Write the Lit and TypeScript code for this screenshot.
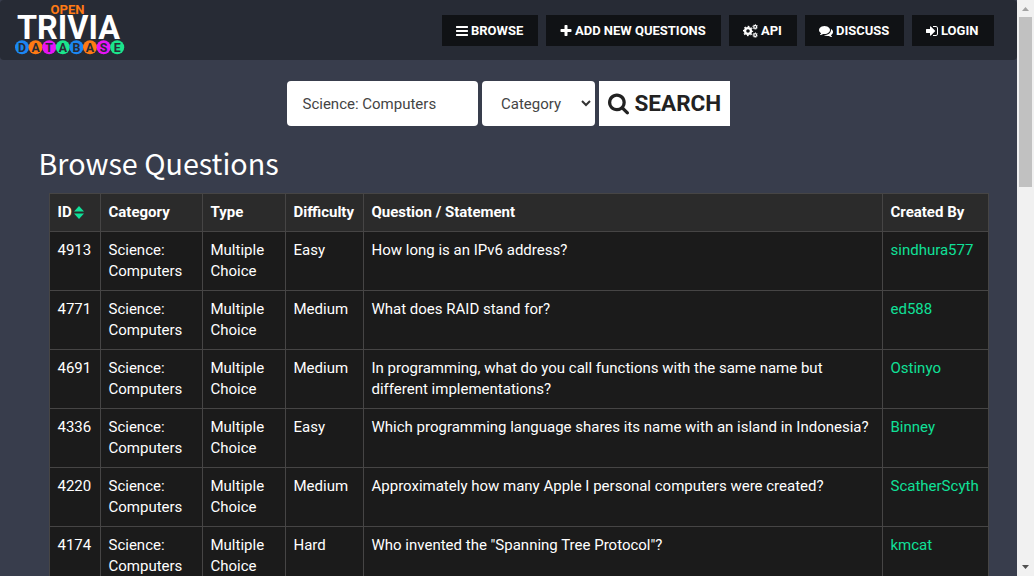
import { LitElement, html, css, svg } from "lit";
import { customElement, property } from "lit/decorators.js";

const ICONS: Record<string, string> = {
  bars: "M1664 1344v128q0 26-19 45t-45 19h-1408q-26 0-45-19t-19-45v-128q0-26 19-45t45-19h1408q26 0 45 19t19 45zm0-512v128q0 26-19 45t-45 19h-1408q-26 0-45-19t-19-45v-128q0-26 19-45t45-19h1408q26 0 45 19t19 45zm0-512v128q0 26-19 45t-45 19h-1408q-26 0-45-19t-19-45v-128q0-26 19-45t45-19h1408q26 0 45 19t19 45z",
  plus: "M1600 736v192q0 40-28 68t-68 28h-416v416q0 40-28 68t-68 28h-192q-40 0-68-28t-28-68v-416h-416q-40 0-68-28t-28-68v-192q0-40 28-68t68-28h416v-416q0-40 28-68t68-28h192q40 0 68 28t28 68v416h416q40 0 68 28t28 68z",
  search: "M1216 832q0-185-131.5-316.5t-316.5-131.5-316.5 131.5-131.5 316.5 131.5 316.5 316.5 131.5 316.5-131.5 131.5-316.5zm512 832q0 52-38 90t-90 38q-54 0-90-38l-343-342q-179 124-399 124-143 0-273.5-55.5t-225-150-150-225-55.5-273.5 55.5-273.5 150-225 225-150 273.5-55.5 273.5 55.5 225 150 150 225 55.5 273.5q0 220-124 399l343 343q37 37 37 90z",
  login: "M1312 896q0 26-19 45l-544 544q-19 19-45 19t-45-19-19-45v-288h-448q-26 0-45-19t-19-45v-384q0-26 19-45t45-19h448v-288q0-26 19-45t45-19 45 19l544 544q19 19 19 45zm352-352v704q0 119-84.5 203.5t-203.5 84.5h-320q-13 0-22.5-9.5t-9.5-22.5q0-4-1-20t-.5-26.5 3-23.5 10-19.5 20.5-6.5h320q66 0 113-47t47-113v-704q0-66-47-113t-113-47h-312l-11.5-1-11.5-3-8-5.5-7-9-2-13.5q0-4-1-20t-.5-26.5 3-23.5 10-19.5 20.5-6.5h320q119 0 203.5 84.5t84.5 203.5z",
  comments: "M1408 768q0 139-94 257t-256.5 186.5-353.5 68.5q-86 0-176-16-124 88-278 128-36 9-86 16h-3q-11 0-20.5-8t-11.5-21q-1-3-1-6.5t.5-6.5 2-6l2.5-5 3.5-5.5 4-5 4.5-5 4-4.5q5-6 23-25t26-29.5 22.5-29 25-38.5 20.5-44q-124-72-195-177t-71-224q0-139 94-257t256.5-186.5 353.5-68.5 353.5 68.5 256.5 186.5 94 257zm384 256q0 120-71 224.5t-195 176.5q10 24 20.5 44t25 38.5 22.5 29 26 29.5 23 25q1 1 4 4.5t4.5 5 4 5 3.5 5.5l2.5 5 2 6 .5 6.5-1 6.5q-3 14-13 22t-22 7q-50-7-86-16-154-40-278-128-90 16-176 16-271 0-472-132 58 4 88 4 161 0 309-45t264-129q125-92 192-212t67-254q0-77-23-152 129 71 204 178t75 230z",
};

const gear = (x: number, y: number, r: number, w: number, t: number) => svg`
  <circle cx=${x} cy=${y} r=${r} fill="none" stroke="currentColor" stroke-width=${w}></circle>
  <circle cx=${x} cy=${y} r=${r + w / 2 + t / 2 - 10} fill="none" stroke="currentColor"
    stroke-width=${t} pathLength="16" stroke-dasharray="1 1" stroke-dashoffset="0.5"></circle>`;

@customElement("fa-icon")
export class FaIcon extends LitElement {
  @property() name = "bars";
  @property() box = "0 0 1792 1792";
  static styles = css`
    :host { display: block; flex: none; }
    svg { display: block; width: 100%; height: 100%; }
  `;
  render() {
    return html`<svg viewBox=${this.box} fill="currentColor">
      ${this.name === "cogs"
        ? svg`${gear(640, 896, 375, 290, 150)}${gear(1560, 370, 185, 160, 110)}${gear(1560, 1422, 185, 160, 110)}`
        : svg`<path d=${ICONS[this.name]}></path>`}
    </svg>`;
  }
}

const NAV = [
  { key: "bars", label: "BROWSE", box: "128 0 1536 1792" },
  { key: "plus", label: "ADD NEW QUESTIONS", box: "192 0 1408 1792" },
  { key: "cogs", label: "API", box: "0 0 1920 1792" },
  { key: "comments", label: "DISCUSS", box: "0 0 1792 1792" },
  { key: "login", label: "LOGIN", box: "128 0 1536 1792" },
];

const ROWS = [
  ["4913", "Easy", "How long is an IPv6 address?", "sindhura577"],
  ["4771", "Medium", "What does RAID stand for?", "ed588"],
  ["4691", "Medium", "In programming, what do you call functions with the same name but different implementations?", "Ostinyo"],
  ["4336", "Easy", "Which programming language shares its name with an island in Indonesia?", "Binney"],
  ["4220", "Medium", "Approximately how many Apple I personal computers were created?", "ScatherScyth"],
  ["4174", "Hard", "Who invented the \"Spanning Tree Protocol\"?", "kmcat"],
];

const DOTS = ["#1c86f2", "#ff7a14", "#e614f5", "#1be58b"];

@customElement("app-root")
export class AppRoot extends LitElement {
  static styles = css`
    :host {
      display: flex; width: 1034px; height: 576px; overflow: hidden;
      background: #383d4c; color: #fff;
      font: 15px/21px Roboto, sans-serif;
    }
    * { box-sizing: border-box; }
    .page { width: 1017px; height: 576px; overflow: hidden; }
    .bar {
      height: 60px; background: #272b35; border-radius: 4px;
      display: flex; justify-content: space-between; padding: 0 23px 0 0;
    }
    .logo { width: 140px; height: 60px; display: block; }
    .nav { display: flex; gap: 8px; padding-top: 15px; }
    .btn {
      height: 31px; background: #101215; display: flex; align-items: center;
      padding-left: 14px; gap: 3px; font-size: 13px; font-weight: 700; white-space: nowrap;
    }
    .btn fa-icon { height: 14px; }
    .bars { width: 96px; } .bars fa-icon { width: 12px; }
    .plus { width: 175px; } .plus fa-icon { width: 12px; }
    .cogs { width: 68px; } .cogs fa-icon { width: 15px; }
    .comments { width: 99px; } .comments fa-icon { width: 14px; }
    .login { width: 82px; } .login fa-icon { width: 12px; }
    .form { display: flex; gap: 4px; margin: 21px 0 0 287px; height: 45px; }
    .field {
      background: #fff; color: #444; border-radius: 4px; display: flex;
      align-items: center; font-size: 15px; padding-top: 1px;
    }
    .text { width: 191px; padding-left: 15.5px; }
    .select { width: 113px; padding-left: 19px; padding-right: 3px; justify-content: space-between; }
    .chev { width: 12px; height: 8px; display: block; margin-top: -2px; }
    .search {
      width: 131px; background: #fff; color: #222; display: flex; align-items: center;
      padding-left: 9px; gap: 5.5px; font-size: 22.5px; font-weight: 700;
    }
    .search fa-icon { width: 21px; height: 22px; }
    .title {
      margin: 16px 0 0 38.5px; height: 51px; font: 400 28.7px/42px "Noto Sans CJK JP", sans-serif;
      white-space: nowrap;
    }
    .grid {
      margin-left: 49px; width: 940px; table-layout: fixed; border-collapse: separate;
      border-spacing: 0; background: #1b1b1b; border-left: 1px solid #464545;
      border-top: 1px solid #464545;
    }
    .grid th, .grid td {
      border-right: 1px solid #464545; border-bottom: 1px solid #464545;
      padding: 8px 0 8px 7.5px; text-align: left; vertical-align: top;
    }
    .grid th { background: #2b2b2b; font-weight: 700; height: 38px; }
    .grid td { height: 59px; }
    .c1 { width: 51px; } .c2 { width: 102px; } .c3 { width: 83px; }
    .c4 { width: 78px; } .c5 { width: 519px; } .c6 { width: 106px; }
    .id { display: flex; align-items: center; gap: 2.5px; }
    .sort { width: 10px; height: 13px; display: block; margin-top: -1px; }
    .user { color: #10e098; }
    .track {
      width: 17px; height: 576px; background: #f1f1f1; display: flex;
      flex-direction: column; align-items: center;
    }
    .arrow { width: 17px; height: 17px; display: block; flex: none; }
    .rail { flex: 1; }
    .thumb { width: 13px; height: 170px; background: #c1c1c1; }
  `;

  render() {
    return html`
      <div class="page">
        <div class="bar">
          <svg class="logo" viewBox="0 0 140 60" font-family="Roboto, sans-serif">
            <text x="50.5" y="13.5" font-size="12.7" font-weight="700" fill="#ff7a14" textLength="34" lengthAdjust="spacingAndGlyphs">OPEN</text>
            <text x="17" y="39.3" font-size="32.8" font-weight="700" fill="#fff" textLength="103" lengthAdjust="spacingAndGlyphs">TRIVIA</text>
            ${"DATABASE".split("").map((ch, i) => svg`
              <circle cx=${22 + i * 13.6} cy="47.3" r="7" fill=${DOTS[i % 4]}></circle>
              <text x=${22 + i * 13.6} y="51.8" text-anchor="middle" font-size="12.4" font-weight="700" fill="#272b35">${ch}</text>`)}
          </svg>
          <div class="nav">
            ${NAV.map((n) => html`<div class="btn ${n.key}"><fa-icon name=${n.key} box=${n.box}></fa-icon><span>${n.label}</span></div>`)}
          </div>
        </div>
        <div class="form">
          <div class="field text">Science: Computers</div>
          <div class="field select"><span>Category</span>
            <svg class="chev" viewBox="0 0 12 8"><path d="M2 2l4 4 4-4" fill="none" stroke="#333" stroke-width="2"></path></svg>
          </div>
          <div class="search"><fa-icon name="search" box="64 128 1664 1664"></fa-icon><span>SEARCH</span></div>
        </div>
        <div class="title">Browse Questions</div>
        <table class="grid">
          <colgroup><col class="c1"><col class="c2"><col class="c3"><col class="c4"><col class="c5"><col class="c6"></colgroup>
          <thead><tr>
            <th><div class="id">ID<svg class="sort" viewBox="0 0 10 13" fill="#10e098"><path d="M5 0l5 5.6H0zM5 13l5-5.6H0z"></path></svg></div></th>
            <th>Category</th><th>Type</th><th>Difficulty</th><th>Question / Statement</th><th>Created By</th>
          </tr></thead>
          <tbody>
            ${ROWS.map((r) => html`<tr>
              <td>${r[0]}</td><td>Science:<br>Computers</td><td>Multiple<br>Choice</td>
              <td>${r[1]}</td><td>${r[2]}</td><td class="user">${r[3]}</td>
            </tr>`)}
          </tbody>
        </table>
      </div>
      <div class="track">
        <svg class="arrow" viewBox="0 0 17 17"><path d="M5 11l3.5-4 3.5 4z" fill="#a3a3a3"></path></svg>
        <div class="thumb"></div>
        <div class="rail"></div>
        <svg class="arrow" viewBox="0 0 17 17"><path d="M5 6l3.5 4L12 6z" fill="#505050"></path></svg>
      </div>`;
  }
}
